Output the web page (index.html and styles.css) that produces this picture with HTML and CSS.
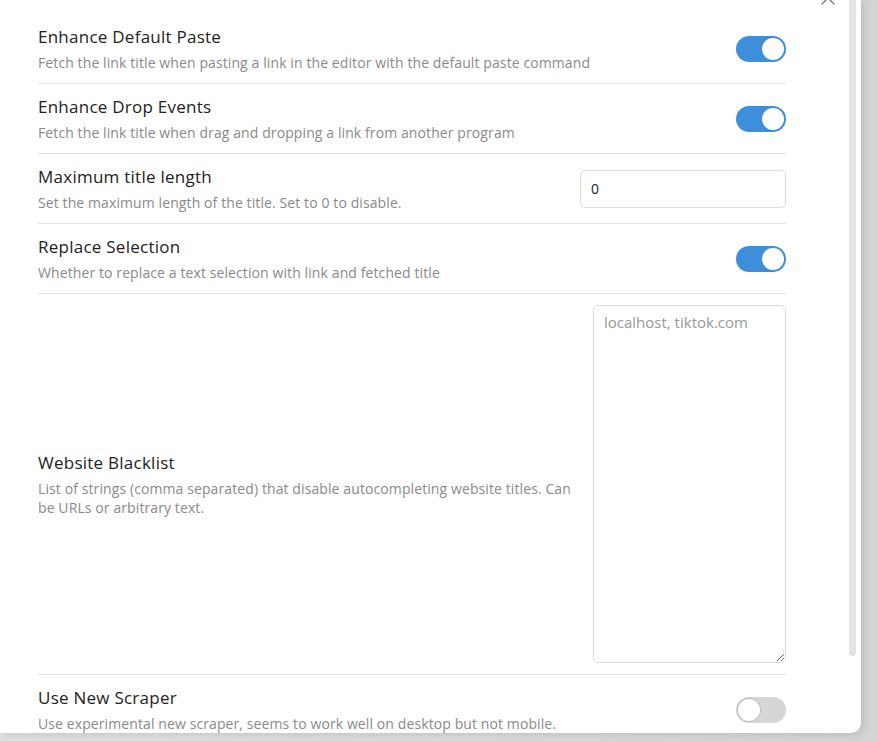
FILE: index.html
```html
<!DOCTYPE html>
<html>
<head>
<meta charset="utf-8">
<link rel="stylesheet" href="styles.css">
</head>
<body>
<div class="modal">
  <svg class="close" width="14" height="14" viewBox="0 0 14 14"><path d="M1 1 L13 13 M13 1 L1 13" stroke="#888" stroke-width="1.6" fill="none" stroke-linecap="round"/></svg>
  <div class="scroll-thumb"></div>
  <div class="content">
    <div class="setting">
      <div class="info">
        <div class="name">Enhance Default Paste</div>
        <div class="desc">Fetch the link title when pasting a link in the editor with the default paste command</div>
      </div>
      <div class="toggle on"><span class="knob"></span></div>
    </div>
    <div class="setting">
      <div class="info">
        <div class="name">Enhance Drop Events</div>
        <div class="desc">Fetch the link title when drag and dropping a link from another program</div>
      </div>
      <div class="toggle on"><span class="knob"></span></div>
    </div>
    <div class="setting">
      <div class="info">
        <div class="name">Maximum title length</div>
        <div class="desc">Set the maximum length of the title. Set to 0 to disable.</div>
      </div>
      <input class="text-input" type="text" value="0">
    </div>
    <div class="setting">
      <div class="info">
        <div class="name">Replace Selection</div>
        <div class="desc">Whether to replace a text selection with link and fetched title</div>
      </div>
      <div class="toggle on"><span class="knob"></span></div>
    </div>
    <div class="setting">
      <div class="info">
        <div class="name">Website Blacklist</div>
        <div class="desc">List of strings (comma separated) that disable autocompleting website titles. Can be URLs or arbitrary text.</div>
      </div>
      <textarea class="area" placeholder="localhost, tiktok.com"></textarea>
    </div>
    <div class="setting">
      <div class="info">
        <div class="name">Use New Scraper</div>
        <div class="desc">Use experimental new scraper, seems to work well on desktop but not mobile.</div>
      </div>
      <div class="toggle"><span class="knob"></span></div>
    </div>
  </div>
</div>
</body>
</html>
```
FILE: styles.css
```css
html, body {
  margin: 0;
  padding: 0;
}
body {
  width: 877px;
  height: 741px;
  overflow: hidden;
  background: linear-gradient(90deg, #e2e2e2 0%, #d4d4d4 100%);
  font-family: "Open Sans", "Noto Sans", sans-serif;
}
.modal {
  position: relative;
  width: 861px;
  height: 733px;
  background: #fff;
  border-bottom-right-radius: 10px;
  box-shadow: 2px 2px 8px rgba(0, 0, 0, 0.12);
  overflow: hidden;
}
.close {
  position: absolute;
  left: 821px;
  top: -9px;
}
.scroll-thumb {
  position: absolute;
  right: 5px;
  top: 0;
  width: 7px;
  height: 656px;
  background: #e4e4e4;
  border-radius: 0 0 4px 4px;
}
.content {
  width: 748px;
  padding: 14px 0 0 38px;
}
.setting {
  display: flex;
  align-items: center;
  padding: 11px 0;
  border-top: 1px solid #e3e3e3;
}
.setting:first-child {
  border-top: none;
}
.info {
  flex: 1 1 auto;
  min-width: 0;
  margin-right: 20px;
}
.name {
  font-size: 17px;
  line-height: 24px;
  color: #222;
  letter-spacing: 0.25px;
}
.desc {
  font-size: 14px;
  line-height: 19px;
  padding-top: 4px;
  color: #8a8a8a;
  letter-spacing: 0.1px;
}
.toggle {
  flex: none;
  position: relative;
  width: 50px;
  height: 26px;
  border-radius: 13px;
  background: #d6d6d6;
}
.toggle.on {
  background: #3d8fdc;
}
.knob {
  position: absolute;
  top: 2px;
  left: 2px;
  width: 22px;
  height: 22px;
  border-radius: 50%;
  background: #fff;
  box-shadow: 0 0 1px 1px rgba(0, 0, 0, 0.12);
}
.toggle.on .knob {
  left: 26px;
  box-shadow: none;
}
.text-input {
  flex: none;
  box-sizing: border-box;
  width: 206px;
  height: 38px;
  border: 1px solid #dedede;
  border-radius: 5px;
  padding: 0 10px;
  font-family: "Open Sans", "Noto Sans", sans-serif;
  font-size: 14px;
  color: #222;
  outline: none;
}
.area {
  flex: none;
  box-sizing: border-box;
  width: 193px;
  height: 358px;
  border: 1px solid #dedede;
  border-radius: 5px;
  padding: 6px 10px;
  font-family: "Open Sans", "Noto Sans", sans-serif;
  font-size: 15px;
  line-height: 20px;
  color: #222;
  outline: none;
  resize: vertical;
}
.area::placeholder {
  color: #999;
}
```
